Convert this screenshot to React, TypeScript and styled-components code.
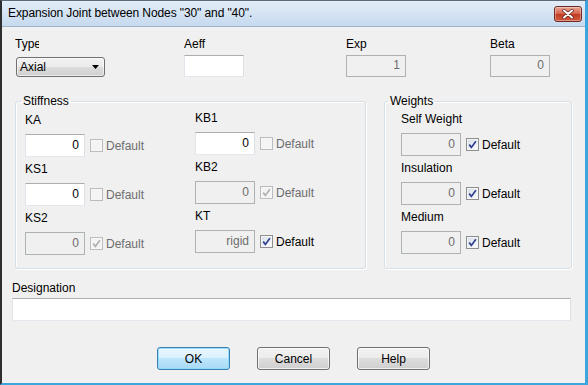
import styled, { createGlobalStyle } from "styled-components";

const GlobalStyle = createGlobalStyle`
  html, body { margin: 0; padding: 0; background: #ffffff; }
  * { box-sizing: border-box; }
`;

const uiFont = `"Liberation Sans", Arial, sans-serif`;

const Window = styled.div`
  width: 588px;
  height: 385px;
  display: flex;
  flex-direction: column;
  background: #c9dbef;
  border-left: 2px solid #2e2e2e;
  border-top: 1px solid #5e6a78;
  border-right: 3px solid #3aa6dd;
  border-bottom: 2px solid #3aa6dd;
  font-family: ${uiFont};
  font-size: 12px;
  color: #000;
`;

const TitleBar = styled.div`
  height: 25px;
  flex: none;
  display: flex;
  align-items: center;
  justify-content: space-between;
  padding: 0 3px 0 6px;
  background: linear-gradient(#e3edf8, #c6d9ee);
`;

const Title = styled.span`
  font-size: 12px;
  line-height: 15px;
  letter-spacing: -0.1px;
`;

const CloseBtn = styled.div`
  width: 28px;
  height: 16px;
  border: 1px solid #6e2b22;
  border-radius: 3px;
  background: linear-gradient(#eaa596 0%, #d6644c 48%, #c13c23 52%, #d2593d 100%);
  display: flex;
  align-items: center;
  justify-content: center;
  box-shadow: inset 0 0 0 1px rgba(255, 255, 255, 0.35);
`;

const Client = styled.div`
  flex: 1;
  background: #f0f0f0;
  border-top: 1px solid #9fb3c9;
  padding: 10px 0 0 13px;
  display: flex;
  flex-direction: column;
`;

const TopRow = styled.div`
  display: grid;
  grid-template-columns: 169px 162px 144px 60px;
`;

const TopField = styled.div`
  display: flex;
  flex-direction: column;
`;

const Label = styled.div<{ $clip?: number }>`
  line-height: 15px;
  height: 15px;
  white-space: nowrap;
  overflow: hidden;
  width: ${(p) => (p.$clip ? `${p.$clip}px` : "auto")};
`;

const TopControl = styled.div`
  margin-top: 3px;
  height: 22px;
  display: flex;
  align-items: flex-end;
`;

const Combo = styled.div`
  width: 89px;
  height: 20px;
  margin-left: 1px;
  border: 1px solid #707070;
  border-radius: 3px;
  background: linear-gradient(#f2f2f2 0%, #ebebeb 50%, #dddddd 50%, #cfcfcf 100%);
  display: flex;
  align-items: center;
  justify-content: space-between;
  padding: 0 4px 0 3px;
  box-shadow: inset 0 0 0 1px rgba(255, 255, 255, 0.6);
`;

const TextBox = styled.input<{ $w?: number; $h?: number }>`
  width: ${(p) => p.$w ?? 60}px;
  height: ${(p) => p.$h ?? 22}px;
  margin: 0;
  border: 1px solid #abadb3;
  border-color: #abadb3 #dbdfe6 #e3e9ef #e2e3ea;
  background: #ffffff;
  font-family: ${uiFont};
  font-size: 12px;
  color: #000;
  text-align: right;
  padding: 0 5px 2px 3px;
  outline: none;

  &:disabled {
    background: #f0f0f0;
    border-color: #adb2b5;
    color: #6d6d6d;
    -webkit-text-fill-color: #6d6d6d;
    opacity: 1;
  }
`;

const GroupRow = styled.div`
  margin-top: 17px;
  display: flex;
  gap: 18px;
`;

const Group = styled.fieldset<{ $w: number; $pad: number }>`
  width: ${(p) => p.$w}px;
  height: 175px;
  margin: 0;
  padding: 5px ${(p) => p.$pad}px 0;
  border: 1px solid #d5dfe5;
  border-radius: 3px;
  box-shadow: inset 1px 1px 0 #ffffff, 1px 1px 0 #ffffff;
  min-inline-size: 0;
`;

const Legend = styled.legend<{ $shift: number }>`
  padding: 0 2px;
  margin-left: ${(p) => p.$shift}px;
  line-height: 14px;
  font-size: 12px;
`;

const Columns = styled.div`
  display: flex;
`;

const Column = styled.div<{ $w?: number; $up?: number }>`
  width: ${(p) => (p.$w ? `${p.$w}px` : "auto")};
  margin-top: ${(p) => -(p.$up ?? 0)}px;
  display: flex;
  flex-direction: column;
  gap: 5px;
`;

const Field = styled.div`
  display: flex;
  flex-direction: column;
`;

const FieldRow = styled.div`
  margin-top: 6px;
  height: 23px;
  display: flex;
  align-items: center;
`;

const CheckLabel = styled.div<{ $disabled?: boolean }>`
  display: flex;
  align-items: center;
  margin-left: 5px;
  gap: 3px;
  color: ${(p) => (p.$disabled ? "#6d6d6d" : "#000")};
`;

const Box = styled.span<{ $disabled?: boolean }>`
  width: 13px;
  height: 13px;
  border: 1px solid ${(p) => (p.$disabled ? "#bcbcbc" : "#8e8f8f")};
  background: ${(p) =>
    p.$disabled
      ? "#f4f4f4"
      : "linear-gradient(135deg, #d3dbe6 0%, #eef1f6 60%, #ffffff 100%)"};
  box-shadow: inset 0 0 0 1px ${(p) => (p.$disabled ? "#f7f7f7" : "#f4f4f4")};
  display: flex;
  align-items: center;
  justify-content: center;
`;

const Designation = styled.div`
  margin: 12px 0 0 -3px;
  display: flex;
  flex-direction: column;
`;

const ButtonRow = styled.div`
  margin-top: 26px;
  margin-left: -13px;
  display: flex;
  justify-content: center;
  gap: 27px;
`;

const Button = styled.button<{ $default?: boolean }>`
  width: 73px;
  height: 23px;
  margin: 0;
  padding: 0;
  font-family: ${uiFont};
  font-size: 12px;
  color: #000;
  border: 1px solid ${(p) => (p.$default ? "#3c7fb1" : "#707070")};
  border-radius: 3px;
  background: ${(p) =>
    p.$default
      ? "linear-gradient(#eaf6fd 0%, #d9f0fc 50%, #bee6fd 50%, #a7d9f5 100%)"
      : "linear-gradient(#f2f2f2 0%, #ebebeb 50%, #dddddd 50%, #cfcfcf 100%)"};
  box-shadow: inset 0 0 0 1px
    ${(p) => (p.$default ? "rgba(140, 220, 255, 0.9)" : "rgba(255, 255, 255, 0.7)")};
`;

function Check({ checked, disabled }: { checked?: boolean; disabled?: boolean }) {
  return (
    <Box $disabled={disabled}>
      {checked ? (
        <svg width="9" height="9" viewBox="0 0 9 9">
          <path
            d="M1.2 4.6 L3.4 7.4 L7.9 1.2"
            fill="none"
            stroke={disabled ? "#b0b0b0" : "#2f3f8f"}
            strokeWidth="1.7"
          />
        </svg>
      ) : null}
    </Box>
  );
}

interface FieldDef {
  label: string;
  value: string;
  inputDisabled?: boolean;
  checked?: boolean;
  checkDisabled?: boolean;
}

function InputField({ f }: { f: FieldDef }) {
  return (
    <Field>
      <Label>{f.label}</Label>
      <FieldRow>
        <TextBox $h={23} defaultValue={f.value} disabled={f.inputDisabled} />
        <CheckLabel $disabled={f.checkDisabled}>
          <Check checked={f.checked} disabled={f.checkDisabled} />
          Default
        </CheckLabel>
      </FieldRow>
    </Field>
  );
}

const stiffLeft: FieldDef[] = [
  { label: "KA", value: "0", checkDisabled: true },
  { label: "KS1", value: "0", checkDisabled: true },
  { label: "KS2", value: "0", inputDisabled: true, checked: true, checkDisabled: true },
];

const stiffRight: FieldDef[] = [
  { label: "KB1", value: "0", checkDisabled: true },
  { label: "KB2", value: "0", inputDisabled: true, checked: true, checkDisabled: true },
  { label: "KT", value: "rigid", inputDisabled: true, checked: true },
];

const weights: FieldDef[] = [
  { label: "Self Weight", value: "0", inputDisabled: true, checked: true },
  { label: "Insulation", value: "0", inputDisabled: true, checked: true },
  { label: "Medium", value: "0", inputDisabled: true, checked: true },
];

export default function App() {
  return (
    <>
      <GlobalStyle />
      <Window>
        <TitleBar>
          <Title>Expansion Joint between Nodes "30" and "40".</Title>
          <CloseBtn>
            <svg width="12" height="10" viewBox="0 0 12 10">
              <path
                d="M2 1.5 L10 8.5 M10 1.5 L2 8.5"
                stroke="#5a1e16"
                strokeWidth="3.4"
                strokeLinecap="round"
              />
              <path
                d="M2 1.5 L10 8.5 M10 1.5 L2 8.5"
                stroke="#ffffff"
                strokeWidth="2"
                strokeLinecap="round"
              />
            </svg>
          </CloseBtn>
        </TitleBar>
        <Client>
          <TopRow>
            <TopField>
              <Label $clip={24}>Type</Label>
              <TopControl>
                <Combo>
                  <span>Axial</span>
                  <svg width="8" height="5" viewBox="0 0 8 5">
                    <path d="M0 0 H7 L3.5 4 Z" fill="#000" />
                  </svg>
                </Combo>
              </TopControl>
            </TopField>
            <TopField>
              <Label>Aeff</Label>
              <TopControl>
                <TextBox defaultValue="" />
              </TopControl>
            </TopField>
            <TopField>
              <Label>Exp</Label>
              <TopControl>
                <TextBox defaultValue="1" disabled />
              </TopControl>
            </TopField>
            <TopField>
              <Label>Beta</Label>
              <TopControl>
                <TextBox defaultValue="0" disabled />
              </TopControl>
            </TopField>
          </TopRow>

          <GroupRow>
            <Group $w={351} $pad={9}>
              <Legend $shift={-4}>Stiffness</Legend>
              <Columns>
                <Column $w={170}>
                  {stiffLeft.map((f) => (
                    <InputField key={f.label} f={f} />
                  ))}
                </Column>
                <Column $up={2}>
                  {stiffRight.map((f) => (
                    <InputField key={f.label} f={f} />
                  ))}
                </Column>
              </Columns>
            </Group>
            <Group $w={188} $pad={16}>
              <Legend $shift={-13}>Weights</Legend>
              <Column $up={1}>
                {weights.map((f) => (
                  <InputField key={f.label} f={f} />
                ))}
              </Column>
            </Group>
          </GroupRow>

          <Designation>
            <Label>Designation</Label>
            <TopControl>
              <TextBox $w={559} $h={23} defaultValue="" />
            </TopControl>
          </Designation>

          <ButtonRow>
            <Button $default>OK</Button>
            <Button>Cancel</Button>
            <Button>Help</Button>
          </ButtonRow>
        </Client>
      </Window>
    </>
  );
}
